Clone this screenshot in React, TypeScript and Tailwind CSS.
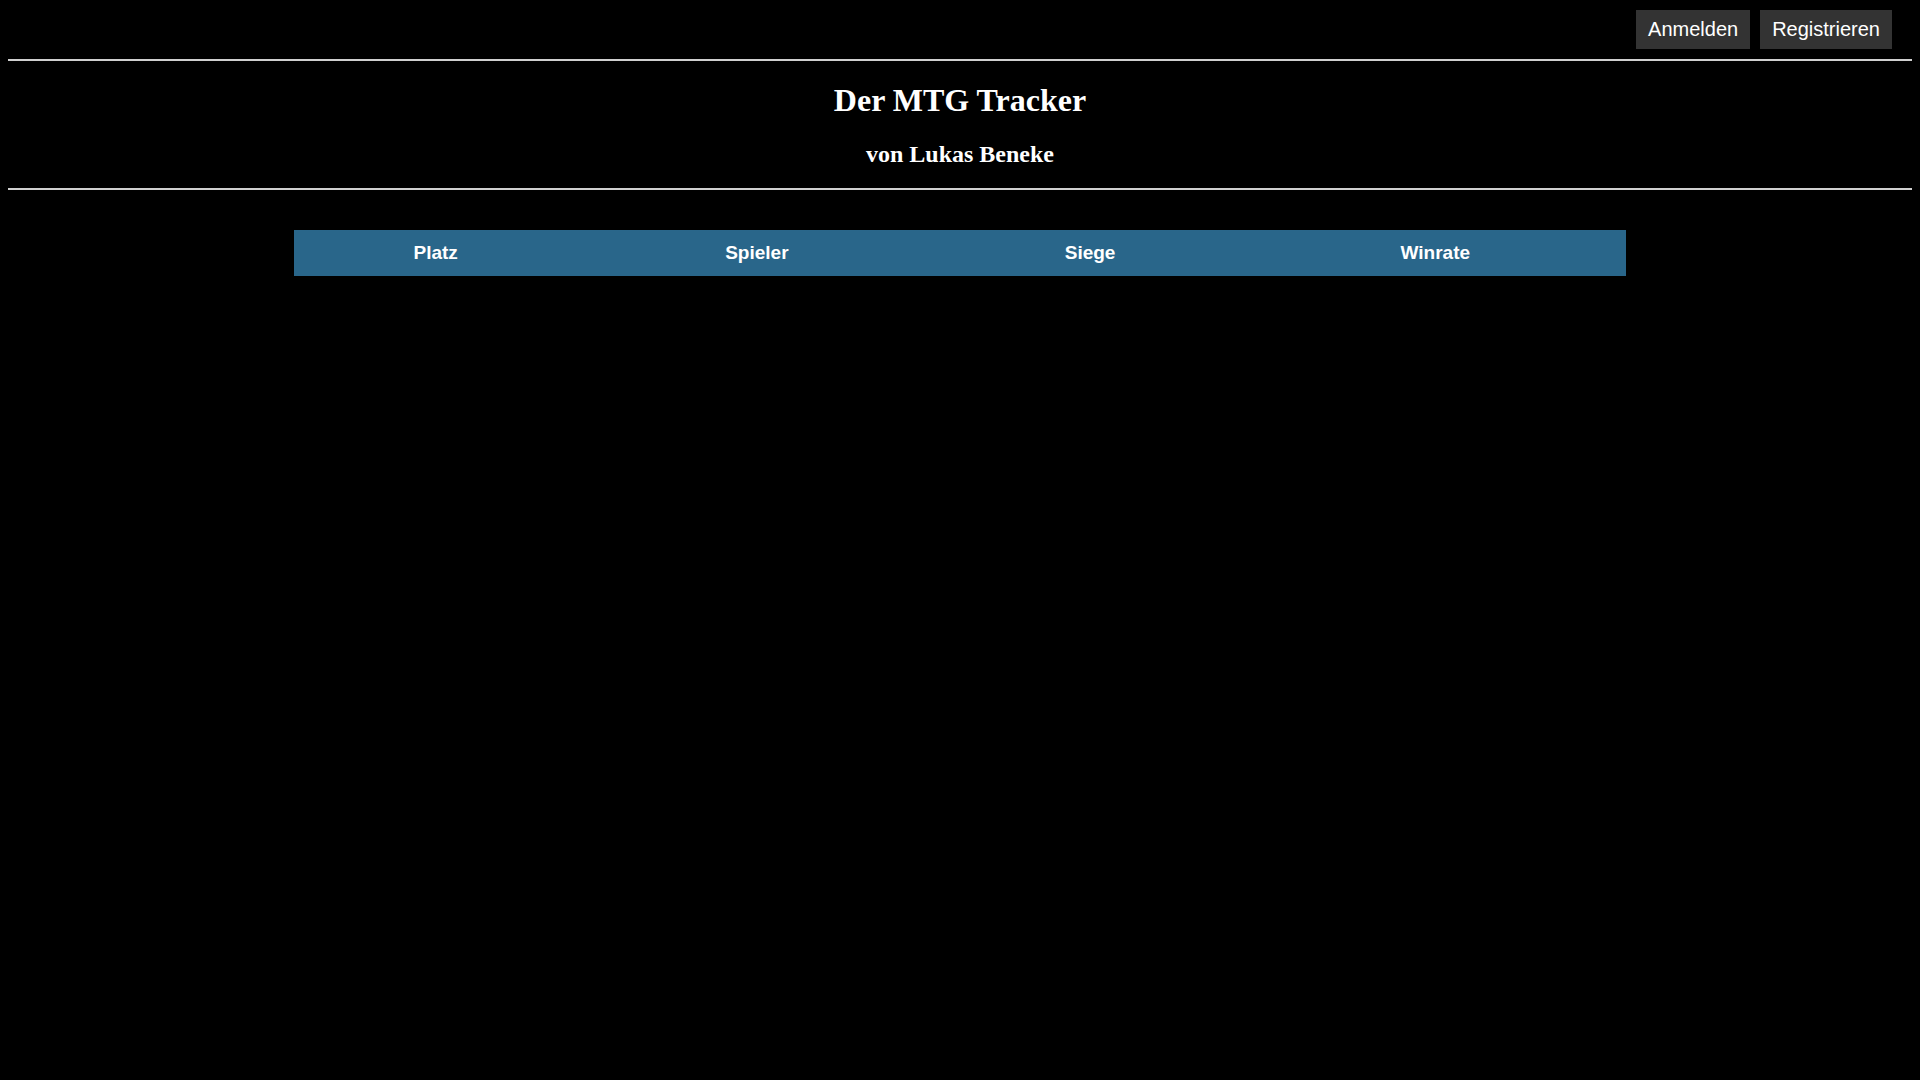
export default function App() {
  const columns = ['Platz', 'Spieler', 'Siege', 'Winrate'];

  return (
    <div className="min-h-screen bg-black text-white px-2 pt-[10px] font-['Liberation_Sans',Arial,sans-serif]">
      {/* Top bar */}
      <div className="flex justify-end gap-[10px] pr-[20px]">
        <button className="bg-[#333333] text-white text-[20px] leading-[23px] px-[12px] py-[8px]">
          Anmelden
        </button>
        <button className="bg-[#333333] text-white text-[20px] leading-[23px] px-[12px] py-[8px]">
          Registrieren
        </button>
      </div>

      <div className="mt-[10px] h-[2px] bg-[#d0d0d0]" />

      {/* Header */}
      <header className="text-center font-['Liberation_Serif','Times_New_Roman',serif] font-bold">
        <h1 className="text-[32px] leading-[37px] pt-[21px]">Der MTG Tracker</h1>
        <h2 className="text-[24px] leading-[28px] pt-[21px] pb-[20px]">von Lukas Beneke</h2>
      </header>

      <div className="h-[2px] bg-[#d0d0d0]" />

      {/* Leaderboard */}
      <div className="mt-[40px] mx-auto w-[70%]">
        <div className="grid grid-cols-[284fr_358fr_308fr_382fr] bg-[#29668a]">
          {columns.map((c) => (
            <div key={c} className="text-center font-bold text-[19px] leading-[22px] py-[12px]">
              {c}
            </div>
          ))}
        </div>
      </div>
    </div>
  );
}
